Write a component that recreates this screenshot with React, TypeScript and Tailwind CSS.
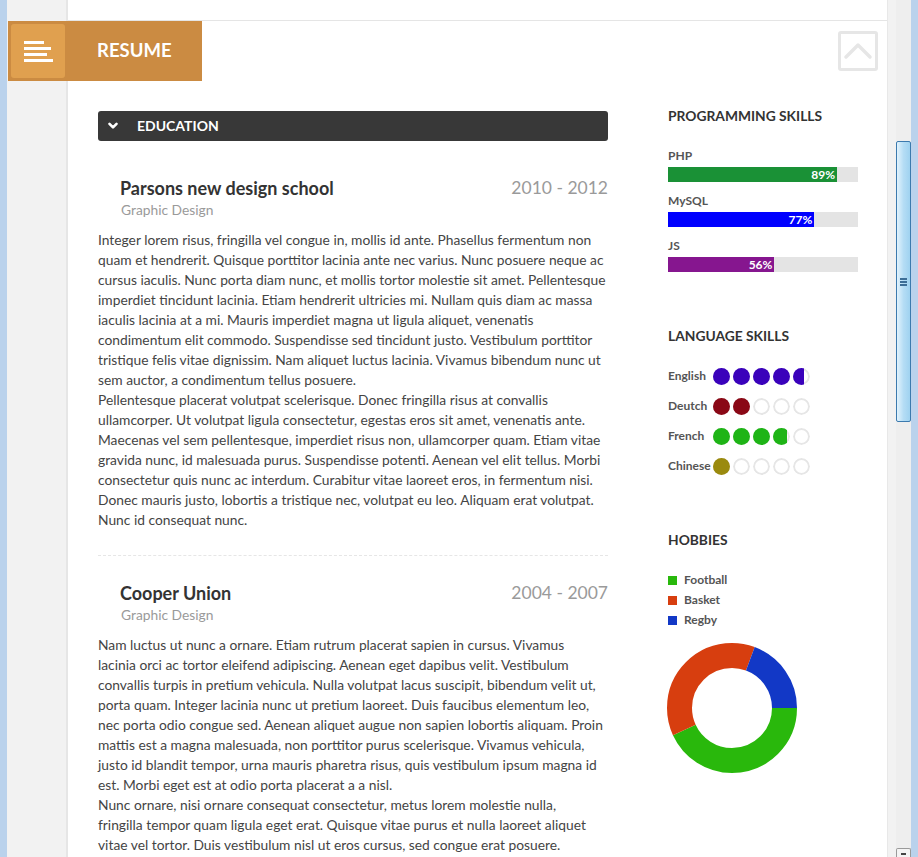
import React from "react";

const para1 = [
  "Integer lorem risus, fringilla vel congue in, mollis id ante. Phasellus fermentum non",
  "quam et hendrerit. Quisque porttitor lacinia ante nec varius. Nunc posuere neque ac",
  "cursus iaculis. Nunc porta diam nunc, et mollis tortor molestie sit amet. Pellentesque",
  "imperdiet tincidunt lacinia. Etiam hendrerit ultricies mi. Nullam quis diam ac massa",
  "iaculis lacinia at a mi. Mauris imperdiet magna ut ligula aliquet, venenatis",
  "condimentum elit commodo. Suspendisse sed tincidunt justo. Vestibulum porttitor",
  "tristique felis vitae dignissim. Nam aliquet luctus lacinia. Vivamus bibendum nunc ut",
  "sem auctor, a condimentum tellus posuere.",
  "Pellentesque placerat volutpat scelerisque. Donec fringilla risus at convallis",
  "ullamcorper. Ut volutpat ligula consectetur, egestas eros sit amet, venenatis ante.",
  "Maecenas vel sem pellentesque, imperdiet risus non, ullamcorper quam. Etiam vitae",
  "gravida nunc, id malesuada purus. Suspendisse potenti. Aenean vel elit tellus. Morbi",
  "consectetur quis nunc ac interdum. Curabitur vitae laoreet eros, in fermentum nisi.",
  "Donec mauris justo, lobortis a tristique nec, volutpat eu leo. Aliquam erat volutpat.",
  "Nunc id consequat nunc.",
];

const para2 = [
  "Nam luctus ut nunc a ornare. Etiam rutrum placerat sapien in cursus. Vivamus",
  "lacinia orci ac tortor eleifend adipiscing. Aenean eget dapibus velit. Vestibulum",
  "convallis turpis in pretium vehicula. Nulla volutpat lacus suscipit, bibendum velit ut,",
  "porta quam. Integer lacinia nunc ut pretium laoreet. Duis faucibus elementum leo,",
  "nec porta odio congue sed. Aenean aliquet augue non sapien lobortis aliquam. Proin",
  "mattis est a magna malesuada, non porttitor purus scelerisque. Vivamus vehicula,",
  "justo id blandit tempor, urna mauris pharetra risus, quis vestibulum ipsum magna id",
  "est. Morbi eget est at odio porta placerat a a nisl.",
  "Nunc ornare, nisi ornare consequat consectetur, metus lorem molestie nulla,",
  "fringilla tempor quam ligula eget erat. Quisque vitae purus et nulla laoreet aliquet",
  "vitae vel tortor. Duis vestibulum nisl ut eros cursus, sed congue erat posuere.",
];

const skills = [
  { name: "PHP", pct: 89, color: "#1a9136" },
  { name: "MySQL", pct: 77, color: "#0000ff" },
  { name: "JS", pct: 56, color: "#86168f" },
];

const langs = [
  { name: "English", level: 4.65, color: "#3a02bb" },
  { name: "Deutch", level: 2, color: "#8a0816" },
  { name: "French", level: 3.82, color: "#1eb416" },
  { name: "Chinese", level: 1, color: "#9a8a0e" },
];

const hobbies = [
  { name: "Football", color: "#29b80c", deg: 155 },
  { name: "Basket", color: "#d73e0f", deg: 135 },
  { name: "Regby", color: "#1238c6", deg: 70 },
];

function Entry({
  title,
  years,
  lines,
  divider,
}: {
  title: string;
  years: string;
  lines: string[];
  divider?: boolean;
}) {
  return (
    <div className={divider ? "pt-[25px] pb-[25px] border-b border-dashed border-[#e6e6e6]" : "pt-[25px] pb-[25px]"}>
      <div className="flex items-center justify-between h-[24px]">
        <div className="pl-[22px] text-[18px] font-bold text-[#333333] leading-[24px]">{title}</div>
        <div className="text-[17.5px] text-[#9a9a9a] leading-[24px]">{years}</div>
      </div>
      <div className="pl-[23px] text-[13.8px] text-[#9a9a9a] leading-[20px]">Graphic Design</div>
      <div className="mt-[10px] text-[13.8px] text-[#444444] leading-[20px]">
        {lines.map((l, i) => (
          <div key={i} className="whitespace-nowrap">
            {l}
          </div>
        ))}
      </div>
    </div>
  );
}

function Dot({ fill, color }: { fill: number; color: string }) {
  return (
    <div className="relative w-[17px] h-[17px] rounded-full overflow-hidden">
      <div className="absolute inset-0 rounded-full border-2 border-[#e6e6e6]" />
      {fill > 0 && (
        <div
          className="absolute left-0 top-0 bottom-0"
          style={{ width: `${fill * 17}px`, backgroundColor: color }}
        />
      )}
    </div>
  );
}

function Donut() {
  const r = 52.5;
  const C = 2 * Math.PI * r;
  let start = 0;
  return (
    <svg width="130" height="130" viewBox="0 0 130 130" className="-ml-[1px]">
      {hobbies.map((h) => {
        const len = (C * h.deg) / 360;
        const el = (
          <circle
            key={h.name}
            cx="65"
            cy="65"
            r={r}
            fill="none"
            stroke={h.color}
            strokeWidth="25"
            strokeDasharray={`${len} ${C}`}
            strokeDashoffset={-start}
          />
        );
        start += len;
        return el;
      })}
    </svg>
  );
}

export default function App() {
  return (
    <div className="flex w-[918px] h-[857px] overflow-hidden bg-white font-[Lato,sans-serif]">
      <div className="w-[7px] shrink-0 bg-[#bad2ec]" />
      <div className="w-[61px] shrink-0 bg-[#f2f2f2] border-r-2 border-[#e6e6e6]" />
      <div className="relative w-[820px] shrink-0 bg-white border-r border-[#e8e8e8]">
        <div className="h-[21px] border-b border-[#e5e5e5]" />
        {/* Ribbon */}
        <div className="absolute left-[-60px] top-[21px] w-[194px] h-[60px] bg-[#cb8b42] flex items-center">
          <div className="ml-[3px] w-[54px] h-[54px] rounded-[3px] bg-[#e0a04f] flex flex-col justify-center gap-[3px] pl-[13px]">
            <div className="h-[3px] w-[20px] bg-white" />
            <div className="h-[3px] w-[27px] bg-white" />
            <div className="h-[3px] w-[23px] bg-white" />
            <div className="h-[3px] w-[29px] bg-white" />
          </div>
          <div className="ml-[32px] text-[18.5px] font-bold text-white">RESUME</div>
        </div>
        <div className="h-[60px] flex items-center justify-end pr-[9px]">
          <div className="w-[40px] h-[40px] rounded-[3px] border-[3px] border-[#e6e6e6] flex items-center justify-center">
            <svg width="34" height="34" viewBox="0 0 34 34">
              <polyline
                points="5,23 17,11 29,23"
                fill="none"
                stroke="#e6e6e6"
                strokeWidth="3.5"
                strokeLinecap="round"
                strokeLinejoin="round"
              />
            </svg>
          </div>
        </div>
        <div className="flex pl-[30px] pt-[25px]">
          {/* Left column */}
          <div className="w-[510px] pt-[5px]">
            <div className="h-[30px] rounded-[3px] bg-[#383838] flex items-center pl-[10px]">
              <svg width="10" height="8" viewBox="0 0 10 8">
                <polyline
                  points="1.5,1.8 5,5.3 8.5,1.8"
                  fill="none"
                  stroke="white"
                  strokeWidth="2.6"
                  strokeLinecap="round"
                  strokeLinejoin="round"
                />
              </svg>
              <span className="ml-[19px] text-[14px] font-bold text-white leading-[30px]">EDUCATION</span>
            </div>
            <div className="pt-[10px]">
              <Entry title="Parsons new design school" years="2010 - 2012" lines={para1} divider />
              <Entry title="Cooper Union" years="2004 - 2007" lines={para2} />
            </div>
          </div>
          {/* Right column */}
          <div className="ml-[60px] w-[190px]">
            <div className="text-[13.8px] font-bold text-[#333333] leading-[20px]">PROGRAMMING SKILLS</div>
            <div className="mt-[23px] flex flex-col gap-[12px]">
              {skills.map((s) => (
                <div key={s.name}>
                  <div className="text-[12px] font-bold text-[#555555] leading-[14px]">{s.name}</div>
                  <div className="mt-[4px] h-[15px] bg-[#e4e4e4]">
                    <div
                      className="h-full flex items-center justify-end pr-[2px] text-[12px] font-bold text-white leading-[15px]"
                      style={{ width: `${s.pct}%`, backgroundColor: s.color }}
                    >
                      {s.pct}%
                    </div>
                  </div>
                </div>
              ))}
            </div>

            <div className="mt-[54px] text-[13.8px] font-bold text-[#333333] leading-[20px]">LANGUAGE SKILLS</div>
            <div className="mt-[21px] flex flex-col gap-[12px]">
              {langs.map((l) => (
                <div key={l.name} className="flex items-center h-[18px]">
                  <div className="w-[45px] text-[12px] font-bold text-[#555555] whitespace-nowrap">{l.name}</div>
                  <div className="flex gap-[3px]">
                    {[0, 1, 2, 3, 4].map((i) => (
                      <Dot key={i} fill={Math.max(0, Math.min(1, l.level - i))} color={l.color} />
                    ))}
                  </div>
                </div>
              ))}
            </div>

            <div className="mt-[55px] text-[13.8px] font-bold text-[#333333] leading-[20px]">HOBBIES</div>
            <div className="mt-[20px] flex flex-col">
              {hobbies.map((h) => (
                <div key={h.name} className="flex items-center h-[20px]">
                  <div className="w-[9px] h-[9px]" style={{ backgroundColor: h.color }} />
                  <span className="ml-[7px] text-[12px] font-bold text-[#555555]">{h.name}</span>
                </div>
              ))}
            </div>
            <div className="mt-[13px]">
              <Donut />
            </div>
          </div>
        </div>
      </div>
      <div className="w-[8px] shrink-0 bg-[#f2f2f2]" />
      <div className="w-[15px] shrink-0 bg-[#eeeeee] flex flex-col items-stretch">
        <div className="mt-[141px] h-[281px] rounded-[2px] border border-[#3c7aae] bg-gradient-to-r from-[#e2f3fd] via-[#b5ddf5] to-[#9fd2f0] flex flex-col items-center justify-center gap-[1px]">
          <div className="h-[2px] w-[7px] bg-[#3d6e97]" />
          <div className="h-[2px] w-[7px] bg-[#3d6e97]" />
          <div className="h-[2px] w-[7px] bg-[#3d6e97]" />
        </div>
        <div className="mt-auto h-[9px] rounded-t-[2px] border border-b-0 border-[#9a9a9a] bg-[#f4f4f4] flex justify-center pt-[4px]">
          <div className="w-[5px] h-[2px] bg-[#444444]" />
        </div>
      </div>
      <div className="w-[7px] shrink-0 bg-[#bad2ec]" />
    </div>
  );
}
